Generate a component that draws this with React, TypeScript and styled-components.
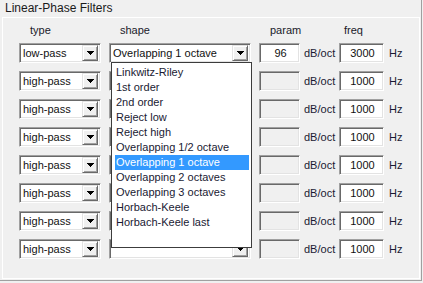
import React from 'react';
import styled, { createGlobalStyle } from 'styled-components';

const GlobalStyle = createGlobalStyle`
    html, body {
        margin: 0;
        padding: 0;
        background: #f0f0f0;
    }
`;

const Page = styled.div`
    position: relative;
    width: 423px;
    height: 283px;
    overflow: hidden;
    background: #f0f0f0;
    font-family: "Liberation Sans", Arial, sans-serif;
    color: #000;
`;

const Frame = styled.div`
    width: 421px;
    height: 280px;
    border-right: 1px solid #a0a0a0;
    border-bottom: 1px solid #a0a0a0;
`;

const Title = styled.div`
    box-sizing: border-box;
    height: 17px;
    padding: 1px 0 0 5px;
    font-size: 12px;
    line-height: 14px;
    color: #1a1a1a;
`;

const GroupBox = styled.div`
    box-sizing: border-box;
    margin-left: 2px;
    width: 418px;
    height: 262px;
    border: 1px solid #fff;
    display: flex;
    flex-direction: column;
`;

const HeaderRow = styled.div`
    display: flex;
    margin-top: 6px;
    padding-left: 16px;
    height: 13px;
    font-size: 11px;
    line-height: 13px;
    color: #1a1a2a;
`;

const HeaderCell = styled.div<{ $w: number; $pad: number; $gap?: number }>`
    box-sizing: border-box;
    width: ${(p) => p.$w}px;
    padding-left: ${(p) => p.$pad}px;
    margin-left: ${(p) => p.$gap ?? 0}px;
`;

const Rows = styled.div`
    display: flex;
    flex-direction: column;
    gap: 8px;
    margin-top: 6px;
`;

const Row = styled.div`
    display: flex;
    align-items: center;
    height: 20px;
    padding-left: 16px;
    font-size: 11px;
`;

const sunken = `
    box-sizing: border-box;
    border: 1px solid;
    border-color: #a0a0a0 #fff #fff #a0a0a0;
    box-shadow: inset 1px 1px 0 #696969, inset -1px -1px 0 #e3e3e3;
`;

const Combo = styled.div<{ $w: number; $gap?: number }>`
    ${sunken}
    position: relative;
    display: flex;
    align-items: center;
    width: ${(p) => p.$w}px;
    height: 20px;
    margin-left: ${(p) => p.$gap ?? 0}px;
    padding: 2px;
    background: #fff;
`;

const ComboText = styled.div`
    flex: 1;
    padding-left: 1px;
    line-height: 16px;
    white-space: nowrap;
    overflow: hidden;
    color: #111;
`;

const ArrowButton = styled.div`
    box-sizing: border-box;
    display: flex;
    align-items: center;
    justify-content: center;
    width: 16px;
    height: 16px;
    background: #f0f0f0;
    border: 1px solid;
    border-color: #e3e3e3 #696969 #696969 #e3e3e3;
    box-shadow: inset 1px 1px 0 #fff, inset -1px -1px 0 #a0a0a0;
`;

const ListBox = styled.div`
    position: absolute;
    z-index: 10;
    top: 100%;
    left: 1px;
    box-sizing: border-box;
    width: 141px;
    height: 186px;
    padding: 2px 2px 1px 3px;
    background: #fff;
    border: 1px solid #3c3c3c;
`;

const ListItem = styled.div<{ $selected?: boolean }>`
    height: 15px;
    line-height: 15px;
    padding-left: 1px;
    white-space: nowrap;
    color: ${(p) => (p.$selected ? '#fff' : '#1a1a33')};
    background: ${(p) => (p.$selected ? '#3399ff' : 'transparent')};
`;

const TextBox = styled.div<{ $w: number; $gap?: number; $disabled?: boolean }>`
    ${sunken}
    width: ${(p) => p.$w}px;
    height: 20px;
    margin-left: ${(p) => p.$gap ?? 0}px;
    padding: 0 0 0 2px;
    line-height: 18px;
    text-align: center;
    background: ${(p) => (p.$disabled ? '#f0f0f0' : '#fff')};
    color: #111;
`;

const Unit = styled.div<{ $w?: number; $pad: number }>`
    box-sizing: border-box;
    ${(p) => (p.$w ? `width: ${p.$w}px;` : '')}
    padding-left: ${(p) => p.$pad}px;
    color: #1a1a33;
    white-space: nowrap;
`;

const Arrow = () => (
    <svg width="7" height="4" viewBox="0 0 7 4" shapeRendering="crispEdges">
        <path d="M0 0h7v1H0zM1 1h5v1H1zM2 2h3v1H2zM3 3h1v1H3z" fill="#000" />
    </svg>
);

const SHAPES = [
    'Linkwitz-Riley',
    '1st order',
    '2nd order',
    'Reject low',
    'Reject high',
    'Overlapping 1/2 octave',
    'Overlapping 1 octave',
    'Overlapping 2 octaves',
    'Overlapping 3 octaves',
    'Horbach-Keele',
    'Horbach-Keele last',
];

type Filter = {
    type: string;
    shape: string;
    param: string;
    freq: string;
};

const filters: Filter[] = [
    { type: 'low-pass', shape: 'Overlapping 1 octave', param: '96', freq: '3000' },
    ...Array.from({ length: 7 }, () => ({ type: 'high-pass', shape: '', param: '', freq: '1000' })),
];

const ComboBox: React.FC<{ w: number; gap?: number; value: string; open?: boolean }> = ({
    w,
    gap,
    value,
    open,
}) => (
    <Combo $w={w} $gap={gap}>
        <ComboText>{value}</ComboText>
        <ArrowButton>
            <Arrow />
        </ArrowButton>
        {open && (
            <ListBox>
                {SHAPES.map((s) => (
                    <ListItem key={s} $selected={s === value}>
                        {s}
                    </ListItem>
                ))}
            </ListBox>
        )}
    </Combo>
);

export default function App() {
    return (
        <Page>
            <GlobalStyle />
            <Frame>
                <Title>Linear-Phase Filters</Title>
                <GroupBox>
                    <HeaderRow>
                        <HeaderCell $w={82} $pad={11}>type</HeaderCell>
                        <HeaderCell $w={142} $pad={11} $gap={8}>shape</HeaderCell>
                        <HeaderCell $w={80} $pad={11} $gap={8}>param</HeaderCell>
                        <HeaderCell $w={45} $pad={5}>freq</HeaderCell>
                    </HeaderRow>
                    <Rows>
                        {filters.map((f, i) => (
                            <Row key={i}>
                                <ComboBox w={82} value={f.type} />
                                <ComboBox w={142} gap={8} value={f.shape} open={i === 0} />
                                <TextBox $w={41} $gap={8} $disabled={!f.param}>
                                    {f.param}
                                </TextBox>
                                <Unit $w={39} $pad={4}>dB/oct</Unit>
                                <TextBox $w={45}>{f.freq}</TextBox>
                                <Unit $pad={5}>Hz</Unit>
                            </Row>
                        ))}
                    </Rows>
                </GroupBox>
            </Frame>
        </Page>
    );
}
